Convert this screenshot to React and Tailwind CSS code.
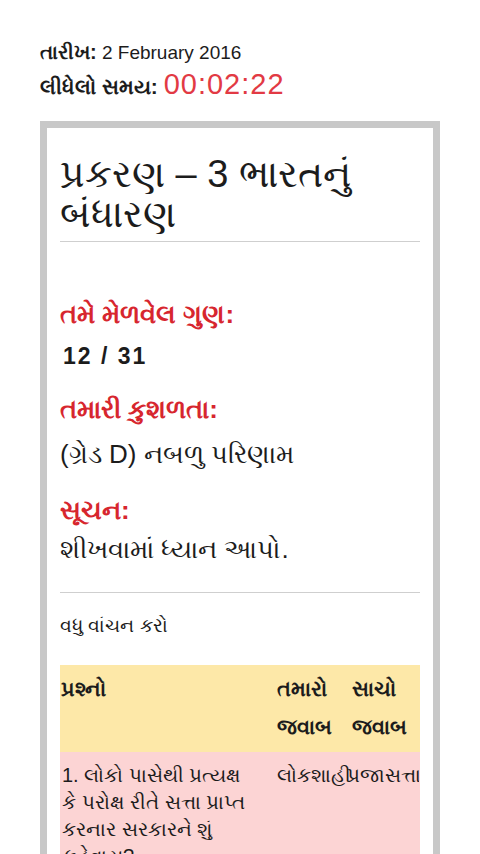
import React from 'react';

const rows = [
  {
    q: '1. લોકો પાસેથી પ્રત્યક્ષ કે પરોક્ષ રીતે સત્તા પ્રાપ્ત કરનાર સરકારને શું કહેવાય?',
    yours: 'લોકશાહી',
    correct: 'પ્રજાસત્તાક',
  },
];

export default function App() {
  return (
    <div className="w-[480px] h-[854px] overflow-hidden bg-white font-['Liberation_Sans',sans-serif] text-[#1c1c1c]">
      {/* --- Header: date & time taken --- */}
      <div className="pt-[36px] pl-[40px]">
        <div className="text-[19px] leading-[32px]">
          <span className="font-bold text-[20px]">તારીખ:</span> 2 February 2016
        </div>
        <div className="text-[21px] leading-[31px]">
          <span className="font-bold">લીધેલો સમય:</span>{' '}
          <span className="text-[29px] text-[#e23a44] tracking-[1px]">00:02:22</span>
        </div>
      </div>

      {/* --- Result card --- */}
      <div className="mt-[19px] mx-[40px] border-[7px] border-[#c8c8c8] px-[13px] pt-[26px]">
        <div className="pb-[7px] border-b border-[#cfcfcf]">
          <h1 className="max-w-[330px] text-[38px] leading-[40px] font-normal">
            પ્રકરણ – 3 ભારતનું બંધારણ
          </h1>
        </div>

        <div className="pt-[54px]">
          <div className="text-[26px] leading-[36px] font-bold text-[#d7262e]">તમે મેળવેલ ગુણ:</div>
          <div className="mt-[6px] text-[23px] leading-[36px] font-bold tracking-[2px] pl-[3px]">12 / 31</div>
          <div className="mt-[17px] text-[26px] leading-[36px] font-bold text-[#d7262e]">તમારી કુશળતા:</div>
          <div className="mt-[9px] text-[26px] leading-[36px]">(ગ્રેડ D) નબળુ પરિણામ</div>
          <div className="mt-[20px] text-[26px] leading-[36px] font-bold text-[#d7262e]">સૂચન:</div>
          <div className="mt-[3px] text-[26px] leading-[36px]">શીખવામાં ધ્યાન આપો.</div>
        </div>

        <div className="mt-[25px] border-t border-[#cfcfcf] pt-[19px] text-[19px] leading-[28px]">
          વધુ વાંચન કરો
        </div>

        {/* --- Answers table --- */}
        <div className="mt-[25px]">
          <div className="grid grid-cols-[217px_70px_72px] bg-[#fde8a8] pt-[5px] pb-[6px] text-[21px] leading-[38px] font-bold">
            <div className="pl-[1px]">પ્રશ્નો</div>
            <div>તમારો જવાબ</div>
            <div className="pl-[5px]">સાચો જવાબ</div>
          </div>
          {rows.map((r) => (
            <div key={r.q} className="grid grid-cols-[217px_70px_72px] bg-[#fcd4d4] pt-[10px] pb-[12px] text-[20px] leading-[27px]">
              <div className="pl-[2px] pr-[24px]">{r.q}</div>
              <div className="whitespace-nowrap">{r.yours}</div>
              <div className="whitespace-nowrap overflow-hidden">{r.correct}</div>
            </div>
          ))}
        </div>
      </div>
    </div>
  );
}
